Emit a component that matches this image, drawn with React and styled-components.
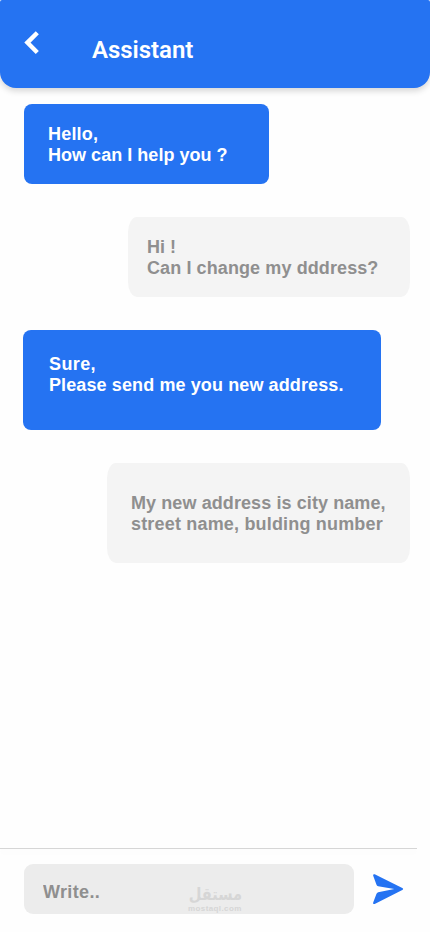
import { useState } from "react";
import styled, { createGlobalStyle } from "styled-components";

const messages = [
  {
    from: "assistant",
    width: 245,
    height: 80,
    padding: "20px 0 0 24px",
    lines: [
      { text: "Hello,", spacing: 0.2 },
      { text: "How can I help you ?", spacing: 0.03 },
    ],
  },
  {
    from: "user",
    width: 282,
    height: 80,
    padding: "20px 0 0 19px",
    lines: [
      { text: "Hi !", spacing: 0 },
      { text: "Can I change my dddress?", spacing: 0.1 },
    ],
  },
  {
    from: "assistant",
    width: 358,
    height: 100,
    padding: "24px 0 0 26px",
    lines: [
      { text: "Sure,", spacing: 0.4 },
      { text: "Please send me you new address.", spacing: 0.11 },
    ],
  },
  {
    from: "user",
    width: 303,
    height: 100,
    padding: "30px 0 0 24px",
    lines: [
      { text: "My new address is city name,", spacing: 0.09 },
      { text: "street name, bulding number", spacing: 0.18 },
    ],
  },
];

export default function App() {
  const [text, setText] = useState("");

  return (
    <>
      <GlobalStyle />
      <ChatPage>
        <Header>
          <BackButton aria-label="Back">
            <svg width="16" height="24" viewBox="0 0 16 24">
              <path
                d="M13.3 1.7 3.4 11.6l9.9 9.9"
                fill="none"
                stroke="#fff"
                strokeWidth="4.4"
              />
            </svg>
          </BackButton>
          <h1>Assistant</h1>
        </Header>

        <Messages>
          {messages.map((message, i) => (
            <Bubble
              key={i}
              $from={message.from}
              $width={message.width}
              $height={message.height}
              $padding={message.padding}
            >
              {message.lines.map((line) => (
                <Line key={line.text} $spacing={line.spacing}>
                  {line.text}
                </Line>
              ))}
            </Bubble>
          ))}
        </Messages>

        <Divider />
        <Composer>
          <Field>
            <input
              placeholder="Write.."
              value={text}
              onChange={(e) => setText(e.target.value)}
            />
            <Watermark>
              <strong dir="rtl">مستقل</strong>
              <span>mostaql.com</span>
            </Watermark>
          </Field>
          <SendButton aria-label="Send">
            <svg width="31" height="31" viewBox="0 0 31 31">
              <path
                d="M1.7.2 29.3 14.1Q31 15.1 29.3 16.1L1.7 30Q-.2 30.5.2 28.6L3.4 20Q3.8 18.6 5.2 18.2L21.3 15.1 5.2 12.3Q3.8 11.8 3.4 10.4L.2 1.7Q-.2-.2 1.7.2Z"
                fill="#2573f2"
              />
            </svg>
          </SendButton>
        </Composer>
      </ChatPage>
    </>
  );
}

const GlobalStyle = createGlobalStyle`
  * {
    box-sizing: border-box;
  }

  body {
    margin: 0;
    background: #fff;
  }

  button {
    display: flex;
    padding: 0;
    border: 0;
    background: none;
    cursor: pointer;
  }
`;

const ChatPage = styled.div`
  display: flex;
  flex-direction: column;
  width: 430px;
  height: 932px;
  overflow: hidden;
  background: #fefefe;
  font-family: "Liberation Sans", Arial, sans-serif;
`;

const Header = styled.header`
  display: flex;
  flex-shrink: 0;
  height: 88px;
  padding-left: 24px;
  border-radius: 2px 2px 16px 16px;
  background: #2573f2;
  box-shadow: 0 3px 6px rgba(0, 0, 0, 0.16);

  h1 {
    margin: 36px 0 0 52px;
    color: #fff;
    font-family: Roboto, sans-serif;
    font-size: 24px;
    font-weight: 600;
    line-height: 29px;
    letter-spacing: -0.05px;
  }
`;

const BackButton = styled.button`
  height: 24px;
  margin-top: 31px;
`;

const Messages = styled.main`
  display: flex;
  flex: 1;
  flex-direction: column;
  gap: 33px;
  padding: 16px 20px 0 23px;
`;

const Bubble = styled.div`
  align-self: ${({ $from }) => ($from === "user" ? "flex-end" : "flex-start")};
  width: ${({ $width }) => $width}px;
  height: ${({ $height }) => $height}px;
  padding: ${({ $padding }) => $padding};
  border-radius: ${({ $from }) => ($from === "user" ? "9px / 15px" : "8px")};
  background: ${({ $from }) => ($from === "user" ? "#f4f4f4" : "#2573f2")};
  color: ${({ $from }) => ($from === "user" ? "#8f8f8f" : "#fff")};

  &:first-child {
    margin-left: 1px;
  }
`;

const Line = styled.p`
  margin: 0;
  font-size: 18px;
  font-weight: 700;
  line-height: 21px;
  letter-spacing: ${({ $spacing }) => $spacing}px;
  white-space: nowrap;
`;

const Divider = styled.div`
  width: 417px;
  height: 1px;
  background: #d6d6d6;
  box-shadow: 0 3px 6px rgba(0, 0, 0, 0.06);
`;

const Composer = styled.footer`
  display: flex;
  align-items: center;
  gap: 18px;
  height: 83px;
  padding: 0 0 3px 24px;
`;

const Field = styled.div`
  position: relative;
  width: 330px;
  height: 50px;

  input {
    width: 100%;
    height: 100%;
    padding: 6px 19px 0;
    border: 0;
    border-radius: 9px;
    outline: 0;
    background: #ececec;
    color: #8f8f8f;
    font-family: inherit;
    font-size: 18px;
    font-weight: 700;
    letter-spacing: 0.35px;
  }

  input::placeholder {
    color: #8f8f8f;
    opacity: 1;
  }
`;

const Watermark = styled.div`
  position: absolute;
  left: 164px;
  top: 21px;
  display: flex;
  flex-direction: column;
  width: 54px;
  color: #d6d6d6;
  pointer-events: none;

  strong {
    align-self: flex-end;
    height: 20px;
    font-family: "DejaVu Sans", sans-serif;
    font-size: 17px;
    line-height: 18px;
    white-space: nowrap;
    transform: scaleX(0.86);
    transform-origin: right;
  }

  span {
    font-size: 8px;
    font-weight: 700;
    line-height: 8px;
    letter-spacing: 0.4px;
  }
`;

const SendButton = styled.button`
  margin-left: 1px;
`;
